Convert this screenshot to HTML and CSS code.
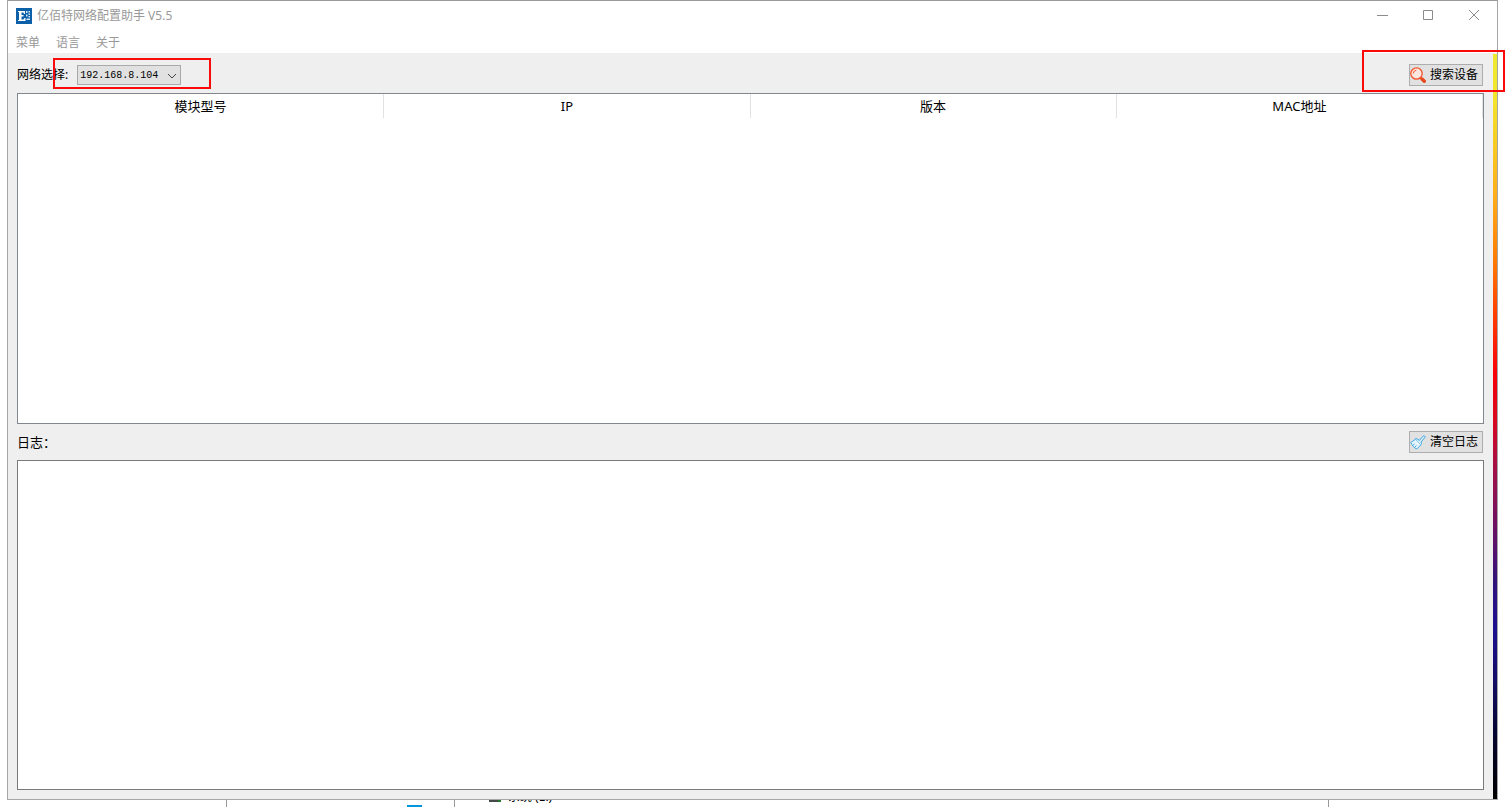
FILE: index.html
```html
<!DOCTYPE html>
<html lang="zh-CN">
<head>
<meta charset="utf-8">
<title>亿佰特网络配置助手 V5.5</title>
<link rel="stylesheet" href="styles.css">
</head>
<body>
<div class="window">
  <header class="titlebar">
    <svg class="logo" viewBox="0 0 16 16" aria-hidden="true">
      <rect width="16" height="16" fill="#0b60a8"/>
      <path d="M2 3h7v3H8L7.500 4.500H5.500V7h2v1.500h-2v3h2L8.500 10h1v3H2v-1h1V4H2z" fill="#fff"/>
      <path d="M10 3h1.500v2H10zM10 6.500h1.500v2H10zM12.500 3H14v1.500h-1.500zM12.500 5.500H14V7h-1.500zM12.500 8H14v1.500h-1.500zM10.500 10.500H14V12h-3.500z" fill="#d5e8f7"/>
    </svg>
    <span class="title">亿佰特网络配置助手 V5.5</span>
    <div class="controls">
      <button class="control" aria-label="最小化"><svg viewBox="0 0 12 12"><path d="M1 5.500h11"/></svg></button>
      <button class="control" aria-label="最大化"><svg viewBox="0 0 12 12"><path d="M1.500 .5h9v9h-9z"/></svg></button>
      <button class="control" aria-label="关闭"><svg viewBox="0 0 12 12"><path d="M1 0l10 10M11 0L1 10"/></svg></button>
    </div>
  </header>
  <nav class="menubar">
    <button class="menu">菜单</button>
    <button class="menu">语言</button>
    <button class="menu">关于</button>
  </nav>
  <div class="body">
    <main class="content">
      <div class="row">
        <label for="network">网络选择:</label>
        <div class="combo">
          <select id="network"><option>192.168.8.104</option></select>
          <svg class="chevron" viewBox="0 0 10 6" aria-hidden="true"><path d="M1 1l4 4 4-4"/></svg>
        </div>
        <button class="action">
          <svg viewBox="0 0 16 16" aria-hidden="true">
            <circle cx="6.500" cy="6.500" r="5.700" fill="#fbe7e0" stroke="#f0532a" stroke-width="1.300"/>
            <path d="M3.300 6.500a3.200 3.200 0 0 1 3-3.200" fill="none" stroke="#f0532a"/>
            <path d="M10.500 10.500l1.500 1.500" stroke="#f0532a" stroke-width="1.500"/>
            <path d="M12 12l2.300 2.300" stroke="#e8481f" stroke-width="3.400" stroke-linecap="round"/>
          </svg>
          搜索设备
        </button>
      </div>
      <div class="panel">
        <table class="devices">
          <thead><tr><th>模块型号</th><th>IP</th><th>版本</th><th>MAC地址</th></tr></thead>
        </table>
      </div>
      <div class="row log-row">
        <label class="log-label" for="log">日志：</label>
        <button class="action">
          <svg viewBox="0 0 16 16" aria-hidden="true">
            <path d="M5.500 4.500l2.500.8 1.300 1.200L13 2.200c1-1.200 2.700.2 1.800 1.400L11 8l.5 1.500-.8 1.500-5.500-5.500z" fill="#d9eefa" stroke="#43a7df" stroke-linejoin="round"/>
            <path d="M5.200 5.500L.8 8.500c1 3 3.200 5.200 6 6.500l3.900-4" fill="#e6f4fc" stroke="#43a7df" stroke-linejoin="round"/>
            <path d="M2.500 11.500l2-1.500M4.500 13.500l2-2" stroke="#43a7df"/>
          </svg>
          清空日志
        </button>
      </div>
      <textarea class="panel log" id="log" readonly></textarea>
    </main>
    <div class="spectrum"></div>
  </div>
</div>
<footer class="backdrop">
  <span class="edge edge-a"></span>
  <span class="task"></span>
  <span class="edge edge-b"></span>
  <span class="drive"></span>
  <span class="drive-name">系统 (E:)</span>
  <span class="edge edge-c"></span>
</footer>
<div class="mark mark-network"></div>
<div class="mark mark-search"></div>
</body>
</html>
```

FILE: styles.css
```css
* { box-sizing: border-box; }

body {
  margin: 0;
  height: 100vh;
  display: flex;
  flex-direction: column;
  position: relative;
  overflow: hidden;
  background: #fff;
  color: #000;
  font: 12px/16px "Noto Sans", "Noto Sans CJK SC", sans-serif;
}

button, select, textarea { font: inherit; color: inherit; margin: 0; }

.window {
  flex: 1;
  min-height: 0;
  margin: 0 7px;
  display: flex;
  flex-direction: column;
  border: 1px solid #a6a6a6;
  border-top-color: #999;
}

.titlebar {
  display: flex;
  align-items: center;
  height: 29px;
  padding-left: 8px;
  gap: 5px;
  color: #999;
}
.logo { width: 16px; height: 16px; }
.controls { display: flex; margin-left: auto; }
.control {
  width: 46px;
  height: 29px;
  padding: 0;
  display: flex;
  align-items: center;
  justify-content: center;
  border: 0;
  background: none;
}
.control svg { width: 12px; height: 12px; fill: none; stroke: #8c8c8c; }

.menubar { display: flex; align-items: center; gap: 16px; height: 23px; padding: 3px 0 0 8px; color: #999; }
.menu { border: 0; padding: 0; background: none; }

.body { flex: 1; min-height: 0; display: flex; background: #efefef; }
.content {
  flex: 1;
  min-width: 0;
  display: flex;
  flex-direction: column;
  padding: 0 9px 9px;
}

.row {
  flex: none;
  display: flex;
  align-items: center;
  height: 40px;
  padding: 4px 1px 0 0;
}
.log-row { height: 36px; padding-top: 0; }
.log-label { font-size: 13px; }

.combo { position: relative; margin-left: 9px; }
.combo select {
  display: block;
  appearance: none;
  width: 104px;
  height: 20px;
  padding: 0 2px;
  border: 1px solid #a9a9a9;
  border-radius: 0;
  background: #e1e1e1;
  font: 10px "Liberation Mono", monospace;
}
.chevron {
  position: absolute;
  right: 4px;
  top: 8px;
  width: 10px;
  height: 6px;
  fill: none;
  stroke: #444;
  pointer-events: none;
}

.action {
  margin-left: auto;
  width: 74px;
  height: 22px;
  padding: 0;
  display: flex;
  align-items: center;
  gap: 4px;
  white-space: nowrap;
  border: 1px solid #adadad;
  background: #e1e1e1;
}
.action svg { flex: none; width: 16px; height: 16px; }

.panel {
  flex: 1 1 0;
  min-height: 0;
  width: 100%;
  padding: 0;
  border: 1px solid #828790;
  background: #fff;
}
.devices { width: 100%; table-layout: fixed; border-collapse: separate; border-spacing: 0; }
.devices th {
  height: 24px;
  padding: 0;
  border-right: 1px solid #e2e2e2;
  font-size: 13px;
  font-weight: 400;
}
.log { resize: none; display: block; border-color: #7a7a7a; outline: 0; border-radius: 0; }

.spectrum {
  width: 4px;
  margin-top: 1px;
  background: linear-gradient(#eeea30 0%, #f2e52c 6%, #ffa81a 20%, #ff7800 28%, #ff3c00 35%, #f80008 43%, #d80820 49%, #a01048 56%, #701060 63%, #30127c 71%, #1c1090 77%, #140c68 84%, #060530 91%, #000 100%);
}

.backdrop { position: relative; height: 7px; overflow: hidden; }
.edge { position: absolute; top: 0; width: 1px; height: 7px; background: #999; }
.edge-a { left: 226px; }
.edge-b { left: 454px; }
.edge-c { left: 1328px; }
.task { position: absolute; left: 407px; bottom: 0; width: 15px; height: 2px; background: #0596dd; }
.drive { position: absolute; left: 489px; top: 0; width: 12px; height: 2px; background: #454a47; border-right: 3px solid #247a2c; }
.drive-name { position: absolute; left: 508px; bottom: 2px; }

.mark { position: absolute; border: 2px solid #fb0a0a; pointer-events: none; }
.mark-network { left: 53px; top: 58px; width: 158px; height: 31px; }
.mark-search { right: 0; top: 50px; width: 143px; height: 42px; }
```
